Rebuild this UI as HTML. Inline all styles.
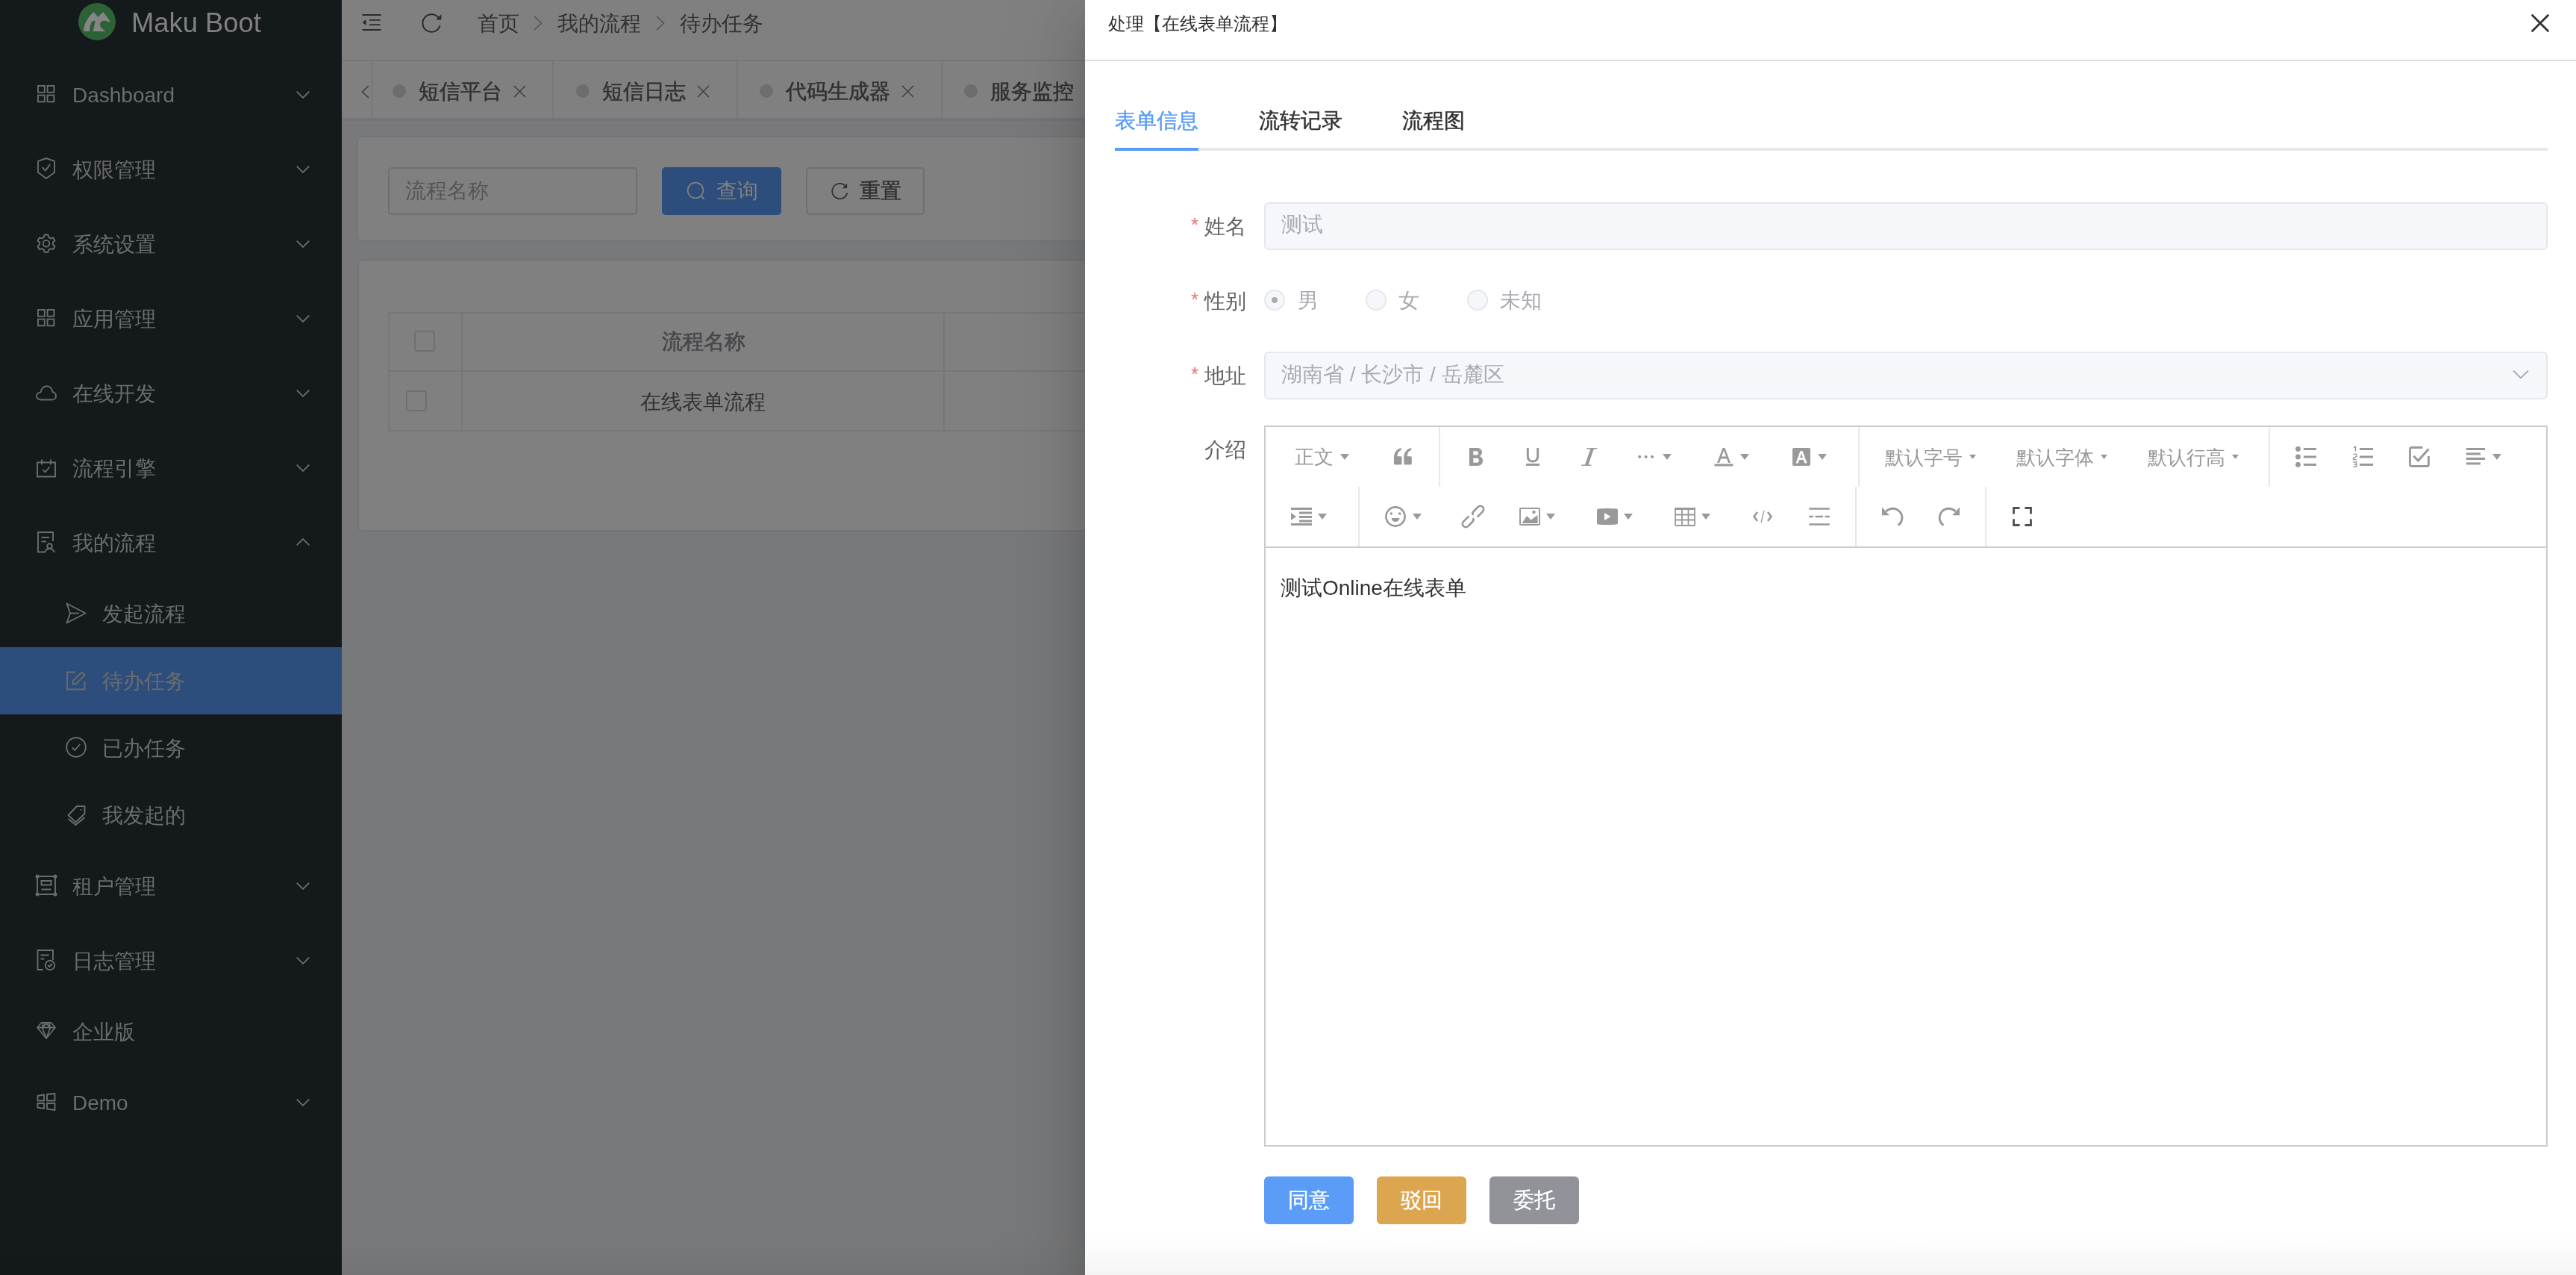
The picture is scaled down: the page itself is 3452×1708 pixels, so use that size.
<!DOCTYPE html>
<html><head><meta charset="utf-8">
<style>
html,body{margin:0;padding:0;width:3452px;height:1708px;overflow:hidden;background:#78797a;font-family:"Liberation Sans",sans-serif;}
.a{position:absolute;}
.t{position:absolute;white-space:nowrap;line-height:40px;font-size:28px;}
svg{position:absolute;overflow:visible;}
/* sidebar */
#side{left:0;top:0;width:458px;height:1708px;background:#14191c;}
.mi{color:#6b6c6c;}
/* main */
#hdr{left:458px;top:0;width:1000px;height:80px;background:#808080;border-bottom:2px solid #767777;}
.dot{width:18px;height:18px;border-radius:50%;background:#6d6d6e;}
.tb{color:#303133;-webkit-text-stroke:0.5px currentColor;}
.cb{width:24px;height:24px;border:2px solid #6e6f73;border-radius:4px;}
#tabs{left:458px;top:82px;width:1000px;height:76px;background:#808080;border-bottom:4px solid #737477;}
.card{position:absolute;background:#808080;border:2px solid #737477;border-radius:7px;}
/* drawer */
#drawer{left:1454px;top:0;width:1998px;height:1708px;background:#fff;box-shadow:0 32px 96px 32px rgba(0,0,0,.08),0 24px 64px rgba(0,0,0,.12),0 16px 32px -16px rgba(0,0,0,.16);}
.btn{top:1576px;width:120px;height:64px;border-radius:6px;color:#fff;font-size:28px;line-height:64px;text-align:center;-webkit-text-stroke:0.3px #fff;}
#root{position:absolute;left:0;top:0;width:3452px;height:1708px;overflow:hidden;will-change:transform;background:#78797a;}
</style></head><body><div id="root">

<!-- ============ SIDEBAR ============ -->
<div id="side" class="a">
  <div class="a" style="left:105px;top:4px;width:50px;height:50px;border-radius:50%;background:#2d6136;"></div>
  <svg style="left:105px;top:4px" width="50" height="50" viewBox="0 0 50 50"><path d="M7 37.9 C7.8 28 12 19.5 20.6 12 L26.1 18.8 L33.4 12 L42.8 24.7 L40.9 25.6 C37 23.3 32.6 23 30.3 25.3 C28.3 27.6 28.6 31.4 31 33.4 L36.2 37.9 L19.7 37.9 L22.8 24.2 C21 23.4 18.6 23.8 17.4 26 C15.9 29 15.3 33 15.2 37.9 Z" fill="#858585"/></svg>
  <div class="t" style="left:176px;top:6px;font-size:36.4px;line-height:50px;color:#808080;">Maku Boot</div>
  <div class="t mi" style="left:97px;top:108px;">Dashboard</div>
  <svg style="left:397px;top:122px" width="18" height="10" viewBox="0 0 18 10"><path d="M0.7 0.7 L9 9 L17.3 0.7" fill="none" stroke="#6b6c6c" stroke-width="1.8"/></svg>
  <div class="t mi" style="left:97px;top:208px;">权限管理</div>
  <svg style="left:397px;top:222px" width="18" height="10" viewBox="0 0 18 10"><path d="M0.7 0.7 L9 9 L17.3 0.7" fill="none" stroke="#6b6c6c" stroke-width="1.8"/></svg>
  <div class="t mi" style="left:97px;top:308px;">系统设置</div>
  <svg style="left:397px;top:322px" width="18" height="10" viewBox="0 0 18 10"><path d="M0.7 0.7 L9 9 L17.3 0.7" fill="none" stroke="#6b6c6c" stroke-width="1.8"/></svg>
  <div class="t mi" style="left:97px;top:408px;">应用管理</div>
  <svg style="left:397px;top:422px" width="18" height="10" viewBox="0 0 18 10"><path d="M0.7 0.7 L9 9 L17.3 0.7" fill="none" stroke="#6b6c6c" stroke-width="1.8"/></svg>
  <div class="t mi" style="left:97px;top:508px;">在线开发</div>
  <svg style="left:397px;top:522px" width="18" height="10" viewBox="0 0 18 10"><path d="M0.7 0.7 L9 9 L17.3 0.7" fill="none" stroke="#6b6c6c" stroke-width="1.8"/></svg>
  <div class="t mi" style="left:97px;top:608px;">流程引擎</div>
  <svg style="left:397px;top:622px" width="18" height="10" viewBox="0 0 18 10"><path d="M0.7 0.7 L9 9 L17.3 0.7" fill="none" stroke="#6b6c6c" stroke-width="1.8"/></svg>
  <div class="t mi" style="left:97px;top:708px;">我的流程</div>
  <svg style="left:397px;top:721px" width="18" height="10" viewBox="0 0 18 10"><path d="M0.7 9.3 L9 1 L17.3 9.3" fill="none" stroke="#6b6c6c" stroke-width="1.8"/></svg>
  <svg style="left:50px;top:114px" width="24" height="24" viewBox="0 0 24 24" fill="none" stroke="#6b6c6c" stroke-width="1.9"><rect x="0.95" y="0.95" width="8.8" height="8.8"/><rect x="13.55" y="0.95" width="8.8" height="8.8"/><rect x="0.95" y="13.55" width="8.8" height="8.8"/><rect x="13.55" y="13.55" width="8.8" height="8.8"/></svg>
  <svg style="left:50px;top:211px" width="24" height="29" viewBox="0 0 24 29" fill="none" stroke="#6b6c6c" stroke-width="1.9" stroke-linejoin="round"><path d="M12 1 L23 4.8 L23 20 L12 28 L1 20 L1 4.8 Z"/><path d="M6.6 13 L10.8 17.6 L17.2 9.2"/></svg>
  <svg style="left:49px;top:313px" width="26" height="26" viewBox="0 0 26 26" fill="none" stroke="#6b6c6c" stroke-width="1.9" stroke-linejoin="round"><path d="M10.6 1.5 L15.4 1.5 L16.2 4.8 L18.9 6.3 L22.1 5.3 L24.5 9.5 L22 11.8 L22 14.8 L24.5 17 L22.1 21.2 L18.9 20.2 L16.2 21.7 L15.4 24.8 L10.6 24.8 L9.8 21.7 L7.1 20.2 L3.9 21.2 L1.5 17 L4 14.8 L4 11.8 L1.5 9.5 L3.9 5.3 L7.1 6.3 L9.8 4.8 Z"/><circle cx="13" cy="13.2" r="4.3"/></svg>
  <svg style="left:50px;top:414px" width="24" height="24" viewBox="0 0 24 24" fill="none" stroke="#6b6c6c" stroke-width="1.9"><rect x="0.95" y="0.95" width="8.8" height="8.8"/><rect x="13.55" y="0.95" width="8.8" height="8.8"/><rect x="0.95" y="13.55" width="8.8" height="8.8"/><rect x="13.55" y="13.55" width="8.8" height="8.8"/></svg>
  <svg style="left:48px;top:516px" width="28" height="21" viewBox="0 0 28 21" fill="none" stroke="#6b6c6c" stroke-width="1.9" stroke-linejoin="round"><path d="M7 19.5 C3.5 19.5 1 17.2 1 14.4 C1 11.6 3.4 9.5 6.4 9.6 C7.2 5 10.6 1.2 14.8 1.2 C19 1.2 22 4.6 22.4 9 C25 9.3 27 11.6 27 14.4 C27 17.4 24.6 19.5 21.6 19.5 Z"/></svg>
  <svg style="left:49px;top:615px" width="26" height="25" viewBox="0 0 26 25" fill="none" stroke="#6b6c6c" stroke-width="1.9"><path d="M1 4.5 L25 4.5 L25 23.5 L1 23.5 Z"/><path d="M7 0.5 L7 7.5 M19 0.5 L19 7.5"/><path d="M8.5 14 L11.5 17.5 L17.5 10.5" stroke-linejoin="round"/></svg>
  <svg style="left:50px;top:712px" width="24" height="29" viewBox="0 0 24 29" fill="none" stroke="#6b6c6c" stroke-width="1.9"><path d="M11 27.5 L1 27.5 L1 1 L21 1 L21 13"/><path d="M5.5 8 L16 8 M5.5 13.5 L12 13.5"/><circle cx="16.5" cy="19.5" r="3.3"/><path d="M10.5 28 C11 24.5 13.5 23 16.5 23 C19.5 23 22 24.5 22.8 28"/></svg>
  <div class="a" style="left:0;top:867px;width:458px;height:90px;background:#2d4e7c;"></div>
  <div class="t mi" style="left:137px;top:803px;">发起流程</div>
  <div class="t mi" style="left:137px;top:893px;">待办任务</div>
  <div class="t mi" style="left:137px;top:983px;">已办任务</div>
  <div class="t mi" style="left:137px;top:1073px;">我发起的</div>
  <svg style="left:88px;top:807px" width="28" height="29" viewBox="0 0 28 29" fill="none" stroke="#6b6c6c" stroke-width="1.9" stroke-linejoin="round"><path d="M1.5 1.5 L26.5 14.5 L1.5 27.5 L6 14.5 Z"/><path d="M6 14.5 L18 14.5"/></svg>
  <svg style="left:89px;top:899px" width="26" height="26" viewBox="0 0 26 26" fill="none" stroke="#6b6c6c" stroke-width="1.9"><path d="M12 1.5 L1 1.5 L1 24.5 L24.5 24.5 L24.5 14"/><path d="M8.5 17.5 L9 12.8 L20.5 1.5 L24.5 5.3 L13 17 Z" stroke-linejoin="round"/></svg>
  <svg style="left:88px;top:987px" width="28" height="28" viewBox="0 0 28 28" fill="none" stroke="#6b6c6c" stroke-width="1.9"><circle cx="14" cy="14" r="12.8"/><path d="M8.8 14.5 L12.3 18 L19.2 10" stroke-linejoin="round"/></svg>
  <svg style="left:90px;top:1078px" width="25" height="28" viewBox="0 0 25 28" fill="none" stroke="#6b6c6c" stroke-width="1.9" stroke-linejoin="round"><path d="M1.5 14 L13 2 L23.5 2 L23.5 12 L11.5 23.5 Z"/><path d="M1.5 19 L11.5 27 L23.5 17"/><circle cx="18.5" cy="7" r="1" fill="#6b6c6c" stroke="none"/></svg>
  <div class="t mi" style="left:97px;top:1168px;">租户管理</div>
  <svg style="left:397px;top:1182px" width="18" height="10" viewBox="0 0 18 10"><path d="M0.7 0.7 L9 9 L17.3 0.7" fill="none" stroke="#6b6c6c" stroke-width="1.8"/></svg>
  <div class="t mi" style="left:97px;top:1268px;">日志管理</div>
  <svg style="left:397px;top:1282px" width="18" height="10" viewBox="0 0 18 10"><path d="M0.7 0.7 L9 9 L17.3 0.7" fill="none" stroke="#6b6c6c" stroke-width="1.8"/></svg>
  <div class="t mi" style="left:97px;top:1458px;">Demo</div>
  <svg style="left:397px;top:1472px" width="18" height="10" viewBox="0 0 18 10"><path d="M0.7 0.7 L9 9 L17.3 0.7" fill="none" stroke="#6b6c6c" stroke-width="1.8"/></svg>
  <div class="t mi" style="left:97px;top:1363px;">企业版</div>
  <svg style="left:48px;top:1172px" width="28" height="28" viewBox="0 0 28 28" fill="none" stroke="#6b6c6c" stroke-width="1.9"><path d="M2 2 L26 2 L26 26 L2 26 Z"/><path d="M7.5 8 L20.5 8 L20.5 13.5 L7.5 13.5 Z M7.5 19.5 L20.5 19.5"/><circle cx="2" cy="2" r="1.6" fill="#6b6c6c"/><circle cx="26" cy="2" r="1.6" fill="#6b6c6c"/><circle cx="2" cy="26" r="1.6" fill="#6b6c6c"/><circle cx="26" cy="26" r="1.6" fill="#6b6c6c"/></svg>
  <svg style="left:49px;top:1272px" width="26" height="29" viewBox="0 0 26 29" fill="none" stroke="#6b6c6c" stroke-width="1.9"><path d="M9 27 L1.5 27 L1.5 1 L22 1 L22 14"/><path d="M5.5 7.5 L16.5 7.5 M5.5 12.5 L10.5 12.5"/><circle cx="18" cy="21" r="6.2"/><path d="M15.3 21 L17.3 23 L20.8 19" stroke-linejoin="round"/></svg>
  <svg style="left:49px;top:1369px" width="26" height="23" viewBox="0 0 26 23" fill="none" stroke="#6b6c6c" stroke-width="1.8" stroke-linejoin="round"><path d="M6.5 1 L19.5 1 L25 7.5 L13 22 L1 7.5 Z"/><path d="M1 7.5 L25 7.5 M9.5 1 L7.5 7.5 L13 22 L18.5 7.5 L16.5 1 M7.5 7.5 L13 2 L18.5 7.5"/></svg>
  <svg style="left:49px;top:1464px" width="26" height="24" viewBox="0 0 26 24" fill="none" stroke="#6b6c6c" stroke-width="1.9" stroke-linejoin="round"><path d="M1.5 4 L10 2.5 L10 10.5 L1.5 10.5 Z M14 2 L24.5 1 L24.5 10.5 L14 10.5 Z M1.5 14 L10 14 L10 21 L1.5 19.8 Z M14 14 L24.5 14 L24.5 23 L14 21.6 Z"/></svg>
</div>

<!-- ============ HEADER ============ -->
<div id="hdr" class="a"></div>
<svg style="left:485px;top:19px" width="26" height="22" viewBox="0 0 26 22"><path d="M0.5 1 L25.5 1 M10 7.9 L24.5 7.9 M10 14.1 L24.5 14.1 M0.5 21 L25.5 21" stroke="#2a2b2c" stroke-width="1.9" fill="none"/><path d="M0.5 11 L5.6 7 L5.6 15 Z" fill="#2a2b2c"/></svg>
<svg style="left:565px;top:17px" width="27" height="27" viewBox="0 0 27 27"><path d="M23.4 8 A11.8 11.8 0 1 0 24.6 17.2" fill="none" stroke="#2a2b2c" stroke-width="2"/><path d="M26.3 2 L26.3 9.6 L19.4 9.6 Z" fill="#2a2b2c"/></svg>
<div class="t" style="left:640px;top:12px;color:#303133;">首页</div>
<svg style="left:715px;top:21px" width="12" height="20" viewBox="0 0 12 20"><path d="M1 1 L10.5 10 L1 19" fill="none" stroke="#545559" stroke-width="1.7"/></svg>
<div class="t" style="left:747px;top:12px;color:#303133;">我的流程</div>
<svg style="left:879px;top:21px" width="12" height="20" viewBox="0 0 12 20"><path d="M1 1 L10.5 10 L1 19" fill="none" stroke="#545559" stroke-width="1.7"/></svg>
<div class="t" style="left:911px;top:12px;color:#303133;">待办任务</div>

<div id="tabs" class="a"></div>
<svg style="left:484px;top:114px" width="11" height="18" viewBox="0 0 11 18"><path d="M10 1 L1.5 9 L10 17" fill="none" stroke="#3f4042" stroke-width="1.7"/></svg>
<div class="a" style="left:498px;top:82px;width:2px;height:76px;background:#76787c;"></div>
<div class="a" style="left:740px;top:82px;width:2px;height:76px;background:#76787c;"></div>
<div class="a" style="left:987px;top:82px;width:2px;height:76px;background:#76787c;"></div>
<div class="a" style="left:1261px;top:82px;width:2px;height:76px;background:#76787c;"></div>
<div class="a dot" style="left:526px;top:113px;"></div>
<div class="t tb" style="left:561px;top:103px;">短信平台</div>
<svg style="left:688px;top:114px" width="17" height="17" viewBox="0 0 17 17"><path d="M1 1 L16 16 M16 1 L1 16" stroke="#3a3b3d" stroke-width="1.4"/></svg>
<div class="a dot" style="left:772px;top:113px;"></div>
<div class="t tb" style="left:807px;top:103px;">短信日志</div>
<svg style="left:934px;top:114px" width="17" height="17" viewBox="0 0 17 17"><path d="M1 1 L16 16 M16 1 L1 16" stroke="#3a3b3d" stroke-width="1.4"/></svg>
<div class="a dot" style="left:1018px;top:113px;"></div>
<div class="t tb" style="left:1053px;top:103px;">代码生成器</div>
<svg style="left:1208px;top:114px" width="17" height="17" viewBox="0 0 17 17"><path d="M1 1 L16 16 M16 1 L1 16" stroke="#3a3b3d" stroke-width="1.4"/></svg>
<div class="a dot" style="left:1292px;top:113px;"></div>
<div class="t tb" style="left:1327px;top:103px;">服务监控</div>

<!-- search card -->
<div class="card" style="left:478px;top:182px;width:1100px;height:138px;"></div>
<div class="a" style="left:520px;top:224px;width:330px;height:60px;border:2px solid #6e6f73;border-radius:5px;"></div>
<div class="t" style="left:543px;top:236px;color:#545559;">流程名称</div>
<div class="a" style="left:887px;top:224px;width:160px;height:64px;background:#2d4e7c;border-radius:5px;"></div>
<svg style="left:920px;top:243px" width="25" height="25" viewBox="0 0 25 25"><circle cx="12" cy="12" r="10.4" fill="none" stroke="#808080" stroke-width="1.6"/><path d="M19.5 19.5 L23.8 23.8" stroke="#808080" stroke-width="1.8"/></svg>
<div class="t" style="left:960px;top:236px;color:#808080;">查询</div>
<div class="a" style="left:1080px;top:224px;width:155px;height:60px;border:2px solid #6e6f73;border-radius:5px;"></div>
<svg style="left:1114px;top:244px" width="24" height="24" viewBox="0 0 24 24"><path d="M19.6 6 A10.2 10.2 0 1 0 21.3 14.5" fill="none" stroke="#303133" stroke-width="1.8"/><path d="M21.2 1.8 L21.2 8.2 L15 8.2 Z" fill="#303133"/></svg>
<div class="t tb" style="left:1152px;top:236px;color:#303133;">重置</div>

<!-- table card -->
<div class="card" style="left:479px;top:347px;width:1100px;height:361px;"></div>
<div class="a" style="left:520px;top:418px;width:1000px;height:156px;border-left:2px solid #76777a;border-top:2px solid #76777a;border-bottom:2px solid #76777a;"></div>
<div class="a" style="left:520px;top:496px;width:1000px;height:2px;background:#76777a;"></div>
<div class="a" style="left:618px;top:418px;width:2px;height:158px;background:#76777a;"></div>
<div class="a" style="left:1264px;top:418px;width:2px;height:158px;background:#76777a;"></div>
<div class="a cb" style="left:555px;top:443px;"></div>
<div class="a cb" style="left:544px;top:523px;"></div>
<div class="t" style="left:887px;top:438px;color:#48494c;-webkit-text-stroke:0.7px #48494c;">流程名称</div>
<div class="t" style="left:858px;top:519px;color:#303133;">在线表单流程</div>

<!-- ============ DRAWER ============ -->
<div id="drawer" class="a"></div>
<div class="t" style="left:1485px;top:12px;font-size:23.8px;color:#303133;">处理【在线表单流程】</div>
<svg style="left:3392px;top:19px" width="24" height="24" viewBox="0 0 24 24"><path d="M1.5 1.5 L22.5 22.5 M22.5 1.5 L1.5 22.5" stroke="#303133" stroke-width="2.8" stroke-linecap="round"/></svg>
<div class="a" style="left:1454px;top:80px;width:1998px;height:2px;background:#dddfe5;"></div>
<div class="t" style="left:1494px;top:142px;color:#5a9cf8;-webkit-text-stroke:0.45px currentColor;">表单信息</div>
<div class="t" style="left:1687px;top:142px;color:#303133;-webkit-text-stroke:0.45px currentColor;">流转记录</div>
<div class="t" style="left:1879px;top:142px;color:#303133;-webkit-text-stroke:0.45px currentColor;">流程图</div>
<div class="a" style="left:1494px;top:198px;width:1920px;height:4px;background:#e5e7ec;"></div>
<div class="a" style="left:1494px;top:198px;width:112px;height:4px;background:#5a9cf8;"></div>
<div class="t" style="left:1596px;top:281px;color:#e47470;font-size:26px;">*</div>
<div class="t" style="left:1614px;top:284px;color:#606266;">姓名</div>
<div class="t" style="left:1596px;top:381px;color:#e47470;font-size:26px;">*</div>
<div class="t" style="left:1614px;top:384px;color:#606266;">性别</div>
<div class="t" style="left:1596px;top:481px;color:#e47470;font-size:26px;">*</div>
<div class="t" style="left:1614px;top:484px;color:#606266;">地址</div>
<div class="t" style="left:1614px;top:583px;color:#606266;">介绍</div>
<div class="a" style="left:1694px;top:271px;width:1716px;height:60px;background:#f5f7fa;border:2px solid #e5e7ec;border-radius:6px;"></div>
<div class="t" style="left:1717px;top:281px;color:#a9abb1;">测试</div>
<div class="a" style="left:1694px;top:471px;width:1716px;height:60px;background:#f5f7fa;border:2px solid #e5e7ec;border-radius:6px;"></div>
<div class="t" style="left:1717px;top:482px;color:#a9abb1;">湖南省 / 长沙市 / 岳麓区</div>
<svg style="left:3367px;top:495px" width="22" height="14" viewBox="0 0 22 14"><path d="M1 1.5 L11 11.5 L21 1.5" fill="none" stroke="#a9abb1" stroke-width="1.9"/></svg>
<div class="a" style="left:1694px;top:388px;width:24px;height:24px;border-radius:50%;background:#f5f7fa;border:2px solid #e5e7ec;"></div>
<div class="a" style="left:1704px;top:398px;width:8px;height:8px;border-radius:50%;background:#a9abb1;"></div>
<div class="t" style="left:1739px;top:383px;color:#a9abb1;">男</div>
<div class="a" style="left:1830px;top:388px;width:24px;height:24px;border-radius:50%;background:#f5f7fa;border:2px solid #e5e7ec;"></div>
<div class="t" style="left:1874px;top:383px;color:#a9abb1;">女</div>
<div class="a" style="left:1966px;top:388px;width:24px;height:24px;border-radius:50%;background:#f5f7fa;border:2px solid #e5e7ec;"></div>
<div class="t" style="left:2010px;top:383px;color:#a9abb1;">未知</div>
<div class="a" style="left:1694px;top:570px;width:1716px;height:962px;border:2px solid #cccccc;"></div>
<div class="a" style="left:1696px;top:732px;width:1716px;height:2px;background:#cccccc;"></div>
<div class="t" style="left:1716px;top:768px;color:#333333;">测试Online在线表单</div>
<div class="a" style="left:1928px;top:572px;width:2px;height:80px;background:#e8e8e8;"></div>
<div class="a" style="left:2490px;top:572px;width:2px;height:80px;background:#e8e8e8;"></div>
<div class="a" style="left:3040px;top:572px;width:2px;height:80px;background:#e8e8e8;"></div>
<div class="t" style="left:1735px;top:592px;font-size:26px;color:#999999;">正文</div>
<svg style="left:1796px;top:608px" width="12" height="8" viewBox="0 0 12 8"><path d="M0 0 L12 0 L6 8 Z" fill="#999999"/></svg>
<svg style="left:1868px;top:600px" width="24" height="23" viewBox="0 0 24 23"><path d="M1.5 22.5 Q0 22.5 0 21 L0 13 C0 6 3.5 1.5 9.8 0.3 L10.2 2.8 C6.5 4 4.8 6.5 4.5 11.3 L9 11.3 Q10.5 11.3 10.5 12.8 L10.5 21 Q10.5 22.5 9 22.5 Z" fill="#999999"/><path d="M1.5 22.5 Q0 22.5 0 21 L0 13 C0 6 3.5 1.5 9.8 0.3 L10.2 2.8 C6.5 4 4.8 6.5 4.5 11.3 L9 11.3 Q10.5 11.3 10.5 12.8 L10.5 21 Q10.5 22.5 9 22.5 Z" transform="translate(13.3,0)" fill="#999999"/></svg>
<svg style="left:1969px;top:600px" width="18" height="24" viewBox="0 0 18 24"><path fill-rule="evenodd" d="M0 0 L10 0 C14.8 0 17 2.6 17 6 C17 8.4 15.8 10.2 13.6 11.1 C16.4 11.9 18 14.3 18 17.3 C18 21.3 15.4 24 10.6 24 L0 24 Z M5.3 4.3 L9.4 4.3 C11.2 4.3 12 5.3 12 6.9 C12 8.5 11.2 9.5 9.4 9.5 L5.3 9.5 Z M5.3 13.7 L9.9 13.7 C12 13.7 12.9 14.8 12.9 16.7 C12.9 18.6 12 19.7 9.9 19.7 L5.3 19.7 Z" fill="#999999"/></svg>
<svg style="left:2045px;top:600px" width="18" height="24" viewBox="0 0 18 24"><path d="M2.3 0 L2.3 11 C2.3 15.8 5 18 9 18 C13 18 15.7 15.8 15.7 11 L15.7 0" fill="none" stroke="#999999" stroke-width="3"/><rect x="0" y="21" width="18" height="3" fill="#999999"/></svg>
<svg style="left:2119px;top:600px" width="22" height="24" viewBox="0 0 22 24"><path d="M7.5 0 L21.5 0 L21 1.5 L16.8 1.5 L9.5 22.5 L13.5 22.5 L13 24 L0 24 L0.5 22.5 L5 22.5 L12.3 1.5 L7 1.5 Z" fill="#999999"/></svg>
<svg style="left:2195px;top:609px" width="22" height="6" viewBox="0 0 22 6"><circle cx="2.2" cy="3" r="2.1" fill="#999999"/><circle cx="10.6" cy="3" r="2.1" fill="#999999"/><circle cx="19" cy="3" r="2.1" fill="#999999"/></svg>
<svg style="left:2228px;top:608px" width="12" height="8" viewBox="0 0 12 8"><path d="M0 0 L12 0 L6 8 Z" fill="#999999"/></svg>
<svg style="left:2297px;top:600px" width="26" height="25" viewBox="0 0 26 25"><path d="M4 20 L11.5 0 L14.5 0 L22 20 L19 20 L17 14.5 L9 14.5 L7 20 Z M10 11.5 L16 11.5 L13 3.5 Z" fill="#999999"/><rect x="0.5" y="21.5" width="25" height="3" fill="#999999"/></svg>
<svg style="left:2332px;top:608px" width="12" height="8" viewBox="0 0 12 8"><path d="M0 0 L12 0 L6 8 Z" fill="#999999"/></svg>
<svg style="left:2402px;top:600px" width="24" height="24" viewBox="0 0 24 24"><rect x="0" y="0" width="24" height="24" rx="2" fill="#999999"/><path d="M4.5 20.5 L10.5 4 L13.5 4 L19.5 20.5 L16.3 20.5 L14.8 16 L9.2 16 L7.7 20.5 Z M10.1 13 L13.9 13 L12 7.5 Z" fill="#fff"/></svg>
<svg style="left:2436px;top:608px" width="12" height="8" viewBox="0 0 12 8"><path d="M0 0 L12 0 L6 8 Z" fill="#999999"/></svg>
<div class="t" style="left:2526px;top:593px;font-size:26px;color:#999999;">默认字号</div>
<svg style="left:2639px;top:609px" width="9" height="6" viewBox="0 0 12 8"><path d="M0 0 L12 0 L6 8 Z" fill="#999999"/></svg>
<div class="t" style="left:2702px;top:593px;font-size:26px;color:#999999;">默认字体</div>
<svg style="left:2815px;top:609px" width="9" height="6" viewBox="0 0 12 8"><path d="M0 0 L12 0 L6 8 Z" fill="#999999"/></svg>
<div class="t" style="left:2878px;top:593px;font-size:26px;color:#999999;">默认行高</div>
<svg style="left:2991px;top:609px" width="9" height="6" viewBox="0 0 12 8"><path d="M0 0 L12 0 L6 8 Z" fill="#999999"/></svg>
<svg style="left:3076px;top:598px" width="28" height="28" viewBox="0 0 28 28"><circle cx="3.5" cy="3.5" r="3.4" fill="#999999"/><circle cx="3.5" cy="14" r="3.4" fill="#999999"/><circle cx="3.5" cy="24.5" r="3.4" fill="#999999"/><rect x="11" y="2" width="17" height="3" fill="#999999"/><rect x="11" y="12.5" width="17" height="3" fill="#999999"/><rect x="11" y="23" width="17" height="3" fill="#999999"/></svg>
<svg style="left:3153px;top:598px" width="28" height="28" viewBox="0 0 28 28"><path d="M1 1.5 L3.5 0.5 L3.5 6.5" fill="none" stroke="#999999" stroke-width="1.4"/><path d="M0.5 10.5 L5 10.5 L5 13.5 L0.5 15.5 L0.5 17.5 L5 17.5" fill="none" stroke="#999999" stroke-width="1.4"/><path d="M0.5 21 L5 21 L5 27 L0.5 27 M1.5 24 L5 24" fill="none" stroke="#999999" stroke-width="1.4"/><rect x="9" y="2" width="18" height="3" fill="#999999"/><rect x="9" y="12.5" width="18" height="3" fill="#999999"/><rect x="9" y="23" width="18" height="3" fill="#999999"/></svg>
<svg style="left:3228px;top:598px" width="28" height="28" viewBox="0 0 28 28"><path d="M18.5 1.5 L4 1.5 Q1.5 1.5 1.5 4 L1.5 24 Q1.5 26.5 4 26.5 L24 26.5 Q26.5 26.5 26.5 24 L26.5 13" fill="none" stroke="#999999" stroke-width="2.8"/><path d="M6.5 13 L12.5 19 L26.5 3.5" fill="none" stroke="#999999" stroke-width="3"/></svg>
<svg style="left:3305px;top:600px" width="26" height="23" viewBox="0 0 26 23"><rect x="0" y="0" width="25" height="3" fill="#999999"/><rect x="0" y="6.5" width="19" height="3" fill="#999999"/><rect x="0" y="13" width="25" height="3" fill="#999999"/><rect x="0" y="19.5" width="19" height="3" fill="#999999"/></svg>
<svg style="left:3340px;top:608px" width="12" height="8" viewBox="0 0 12 8"><path d="M0 0 L12 0 L6 8 Z" fill="#999999"/></svg>
<div class="a" style="left:1820px;top:652px;width:2px;height:80px;background:#e8e8e8;"></div>
<div class="a" style="left:2486px;top:652px;width:2px;height:80px;background:#e8e8e8;"></div>
<div class="a" style="left:2660px;top:652px;width:2px;height:80px;background:#e8e8e8;"></div>
<svg style="left:1730px;top:680px" width="28" height="24" viewBox="0 0 28 24"><rect x="0" y="0" width="28" height="3" fill="#999999"/><rect x="11" y="5.5" width="17" height="3" fill="#999999"/><rect x="11" y="11" width="17" height="3" fill="#999999"/><rect x="11" y="16.5" width="17" height="3" fill="#999999"/><rect x="0" y="21" width="28" height="3" fill="#999999"/><path d="M0 7 L7 12 L0 17 Z" fill="#999999"/></svg>
<svg style="left:1766px;top:688px" width="12" height="8" viewBox="0 0 12 8"><path d="M0 0 L12 0 L6 8 Z" fill="#999999"/></svg>
<svg style="left:1856px;top:678px" width="28" height="28" viewBox="0 0 28 28"><circle cx="14" cy="14" r="12.6" fill="none" stroke="#999999" stroke-width="2.6"/><circle cx="8.3" cy="10" r="1.8" fill="#999999"/><circle cx="19.7" cy="10" r="1.8" fill="#999999"/><path d="M8.5 16 L19.5 16 C19 19.5 16.8 21 14 21 C11.2 21 9 19.5 8.5 16 Z" fill="#999999"/></svg>
<svg style="left:1893px;top:688px" width="12" height="8" viewBox="0 0 12 8"><path d="M0 0 L12 0 L6 8 Z" fill="#999999"/></svg>
<svg style="left:1960px;top:678px" width="28" height="28" viewBox="0 0 28 28"><g transform="rotate(-45 14 14)" fill="none" stroke="#999999" stroke-width="2.7"><path d="M10.5 9.6 L0.2 9.6 A4.4 4.4 0 0 0 0.2 18.4 L8.5 18.4 A4.4 4.4 0 0 0 12.6 15.5"/><path d="M17.5 18.4 L27.8 18.4 A4.4 4.4 0 0 0 27.8 9.6 L19.5 9.6 A4.4 4.4 0 0 0 15.4 12.5"/></g></svg>
<svg style="left:2036px;top:680px" width="28" height="24" viewBox="0 0 28 24"><rect x="1" y="1" width="26" height="22" rx="1" fill="none" stroke="#999999" stroke-width="1.9"/><path d="M3.5 21 L10 11 L15.5 16.5 L24.5 10 L24.5 21 Z" fill="#999999"/><circle cx="19.5" cy="6" r="2.2" fill="#999999"/></svg>
<svg style="left:2072px;top:688px" width="12" height="8" viewBox="0 0 12 8"><path d="M0 0 L12 0 L6 8 Z" fill="#999999"/></svg>
<svg style="left:2140px;top:681px" width="28" height="22" viewBox="0 0 28 22"><path d="M1.5 0.5 Q14 -0.5 26.5 0.5 Q28 0.8 28 3 L28 19 Q28 21.2 26.5 21.5 Q14 22.5 1.5 21.5 Q0 21.2 0 19 L0 3 Q0 0.8 1.5 0.5 Z" fill="#999999"/><path d="M10 6 L18.5 11 L10 16 Z" fill="#fff"/></svg>
<svg style="left:2176px;top:688px" width="12" height="8" viewBox="0 0 12 8"><path d="M0 0 L12 0 L6 8 Z" fill="#999999"/></svg>
<svg style="left:2244px;top:680px" width="28" height="25" viewBox="0 0 28 25"><path d="M1 2 L27 2 M1 9.5 L27 9.5 M1 16.5 L27 16.5 M1 24 L27 24 M1 2 L1 24 M10 2 L10 24 M18.5 2 L18.5 24 M27 2 L27 24" fill="none" stroke="#999999" stroke-width="1.8"/><rect x="0" y="0" width="28" height="3" fill="#999999"/></svg>
<svg style="left:2280px;top:688px" width="12" height="8" viewBox="0 0 12 8"><path d="M0 0 L12 0 L6 8 Z" fill="#999999"/></svg>
<svg style="left:2349px;top:684px" width="26" height="16" viewBox="0 0 26 16"><path d="M6 2 L1.5 8 L6 14 M20 2 L24.5 8 L20 14" fill="none" stroke="#999999" stroke-width="2.6"/><path d="M15 0 L11 16" stroke="#999999" stroke-width="1.3"/></svg>
<svg style="left:2424px;top:680px" width="28" height="24" viewBox="0 0 28 24"><path d="M1.3 1.5 L26.7 1.5 M1.3 22.5 L26.7 22.5" stroke="#999999" stroke-width="2.6" stroke-linecap="round"/><path d="M1.3 12 L5 12 M9.5 12 L18 12 M22.5 12 L26.7 12" stroke="#999999" stroke-width="2.6" stroke-linecap="round"/></svg>
<svg style="left:2522px;top:679px" width="28" height="25" viewBox="0 0 28 25"><path d="M5.4 6.3 A12.3 12.3 0 1 1 21.6 24.6" fill="none" stroke="#999999" stroke-width="2.9"/><path d="M0 0.5 L0 11.3 L9.8 11.3 Z" fill="#999999"/></svg>
<svg style="left:2598px;top:679px" width="28" height="25" viewBox="0 0 28 25"><g transform="translate(28,0) scale(-1,1)"><path d="M5.4 6.3 A12.3 12.3 0 1 1 21.6 24.6" fill="none" stroke="#999999" stroke-width="2.9"/><path d="M0 0.5 L0 11.3 L9.8 11.3 Z" fill="#999999"/></g></svg>
<svg style="left:2697px;top:679px" width="26" height="26" viewBox="0 0 26 26"><path d="M8.5 1.5 L1.5 1.5 L1.5 8.5 M17.5 1.5 L24.5 1.5 L24.5 8.5 M1.5 17.5 L1.5 24.5 L8.5 24.5 M24.5 17.5 L24.5 24.5 L17.5 24.5" fill="none" stroke="#505050" stroke-width="2.8" stroke-linecap="round"/></svg>
<div class="a btn" style="left:1694px;background:#5a9cf8;">同意</div>
<div class="a btn" style="left:1845px;background:#dca550;">驳回</div>
<div class="a btn" style="left:1996px;background:#919398;">委托</div>
<div class="a" style="left:0px;top:1644px;width:3452px;height:64px;background:linear-gradient(to bottom,rgba(0,0,0,0),rgba(0,0,0,0.01) 40%,rgba(0,0,0,0.045));"></div>

</div></body></html>
